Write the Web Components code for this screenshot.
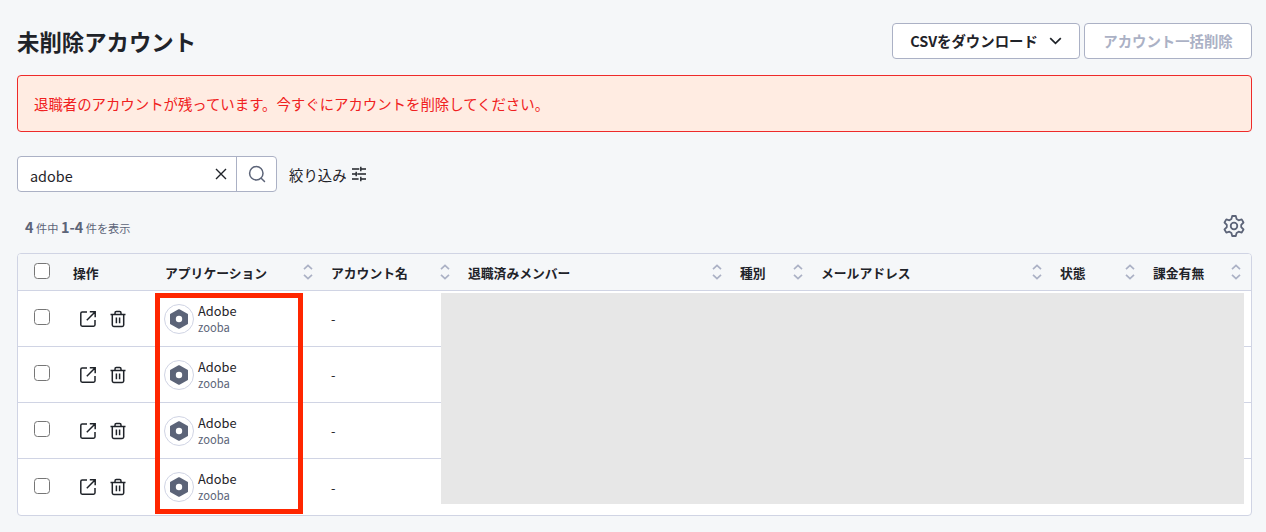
<!DOCTYPE html>
<html lang="ja">
<head>
  <meta charset="utf-8">
  <title>未削除アカウント</title>
  <style>
    body {
      margin: 0;
      background: #f5f7f9;
      color: #1f2329;
      font-family: "Noto Sans CJK JP", sans-serif;
      font-size: 14.4px;
    }
  </style>
</head>
<body>
  <accounts-page></accounts-page>

  <script>
    class AppButton extends HTMLElement {
      constructor() {
        super();
        this.attachShadow({ mode: "open" });
      }

      connectedCallback() {
        this.shadowRoot.innerHTML = `
          <style>
            :host { display: block; }
            button {
              display: flex;
              align-items: center;
              justify-content: center;
              box-sizing: border-box;
              width: 100%;
              height: 36px;
              padding: 0 0 1px;
              border: 1px solid #abb1c5;
              border-radius: 4px;
              background: #fff;
              color: #1f2329;
              font: inherit;
              font-weight: 700;
              white-space: nowrap;
            }
            :host([disabled]) button { color: #abb1c5; }
          </style>
          <button><slot></slot></button>
        `;
      }
    }
    customElements.define("app-button", AppButton);

    class AlertBox extends HTMLElement {
      constructor() {
        super();
        this.attachShadow({ mode: "open" });
      }

      connectedCallback() {
        this.shadowRoot.innerHTML = `
          <style>
            :host {
              display: flex;
              align-items: center;
              box-sizing: border-box;
              height: 57px;
              padding: 0 16px;
              border: 1px solid #ee2a2a;
              border-radius: 4px;
              background: #ffece2;
              color: #f02020;
            }
          </style>
          <slot></slot>
        `;
      }
    }
    customElements.define("alert-box", AlertBox);

    class SearchBox extends HTMLElement {
      constructor() {
        super();
        this.attachShadow({ mode: "open" });
      }

      connectedCallback() {
        this.shadowRoot.innerHTML = `
          <style>
            :host {
              display: flex;
              box-sizing: border-box;
              width: 260px;
              height: 36px;
              border: 1px solid #abb1c5;
              border-radius: 4px;
              background: #fff;
            }
            .field {
              flex: 1;
              display: flex;
              align-items: center;
              justify-content: space-between;
              padding: 0 9px 0 12px;
            }
            .text { padding-top: 2px; }
            .button {
              display: flex;
              align-items: center;
              justify-content: center;
              width: 39px;
              border-left: 1px solid #abb1c5;
            }
            svg { display: block; fill: none; }
          </style>
          <div class="field">
            <span class="text"><slot></slot></span>
            <svg width="12" height="12" viewBox="0 0 12 12" stroke="#1f2329" stroke-width="1.4"><path d="M1 1l10 10M11 1L1 11"/></svg>
          </div>
          <div class="button">
            <svg width="18" height="18" viewBox="0 0 18 18" stroke="#5c6478" stroke-width="1.5" stroke-linecap="round"><circle cx="8.3" cy="8.3" r="6.7"/><path d="M13.2 13.2l3.3 3.3"/></svg>
          </div>
        `;
      }
    }
    customElements.define("search-box", SearchBox);

    class SortIcon extends HTMLElement {
      constructor() {
        super();
        this.attachShadow({ mode: "open" });
      }

      connectedCallback() {
        this.shadowRoot.innerHTML = `
          <style>
            :host { display: block; }
            svg { display: block; }
          </style>
          <svg width="10" height="16" viewBox="0 0 10 16" fill="none" stroke="#abb1c5" stroke-width="1.7"><path d="M1 5.2L5 1.4l4 3.8M1 10.8l4 3.8 4-3.8"/></svg>
        `;
      }
    }
    customElements.define("sort-icon", SortIcon);

    class CheckBox extends HTMLElement {
      constructor() {
        super();
        this.attachShadow({ mode: "open" });
      }

      connectedCallback() {
        this.shadowRoot.innerHTML = `
          <style>
            :host {
              display: block;
              box-sizing: border-box;
              width: 16px;
              height: 16px;
              border: 1.4px solid #767676;
              border-radius: 3.5px;
              background: #fff;
            }
          </style>
        `;
      }
    }
    customElements.define("check-box", CheckBox);

    class AccountRow extends HTMLElement {
      constructor() {
        super();
        this.attachShadow({ mode: "open" });
      }

      connectedCallback() {
        this.shadowRoot.innerHTML = `
          <style>
            :host {
              display: grid;
              grid-template-columns: var(--columns);
              box-sizing: border-box;
              height: 56px;
              align-items: center;
              border-bottom: 1px solid #d0d4e4;
              font-size: 12.8px;
            }
            :host(:last-of-type) { border-bottom: 0; }
            check-box { margin: 0 0 3px 16px; }
            .actions {
              display: flex;
              gap: 12px;
              padding-left: 14px;
            }
            .app {
              display: flex;
              align-items: center;
              gap: 4px;
              padding-left: 7px;
            }
            .logo {
              display: flex;
              align-items: center;
              justify-content: center;
              box-sizing: border-box;
              width: 30px;
              height: 30px;
              border: 1px solid #d0d4e4;
              border-radius: 50%;
            }
            .name { line-height: 16px; }
            .sub {
              color: #5c6478;
              font-size: 11.2px;
              line-height: 16px;
            }
            .account { padding-left: 8px; }
            svg { display: block; }
          </style>
          <check-box></check-box>
          <div class="actions">
            <svg width="18" height="18" viewBox="0 0 18 18" fill="none" stroke="#1f2329" stroke-width="1.5"><path d="M8 2H3.2Q1.8 2 1.8 3.4v11.4q0 1.4 1.4 1.4h11.4q1.4 0 1.4-1.4V10M10.8 1.8H16.2V7.2M16 2L7.8 10.2"/></svg>
            <svg width="18" height="18" viewBox="0 0 18 18" fill="none" stroke="#1f2329" stroke-width="1.5"><path d="M1.5 4.4h15M6 4.2V2.9q0-1.3 1.3-1.3h3.4q1.3 0 1.3 1.3v1.3M3.3 4.4v10.7q0 1.4 1.4 1.4h8.6q1.4 0 1.4-1.4V4.4M7.4 7.6v5.6M10.6 7.6v5.6"/></svg>
          </div>
          <div class="app">
            <div class="logo">
              <svg width="20" height="20" viewBox="0 0 20 20"><path d="M10 1.2l8 4.4v8.8l-8 4.4-8-4.4V5.6z" fill="#5c6478" stroke="#5c6478" stroke-width="2" stroke-linejoin="round"/><circle cx="10" cy="10" r="3.2" fill="#fff"/></svg>
            </div>
            <div>
              <div class="name"><slot name="app"></slot></div>
              <div class="sub"><slot name="tenant"></slot></div>
            </div>
          </div>
          <div class="account"><slot name="account"></slot></div>
        `;
      }
    }
    customElements.define("account-row", AccountRow);

    class AccountsTable extends HTMLElement {
      constructor() {
        super();
        this.attachShadow({ mode: "open" });
      }

      connectedCallback() {
        const titles = ["アプリケーション", "アカウント名", "退職済みメンバー", "種別", "メールアドレス", "状態", "課金有無"];
        const heads = titles.map((t) => `<div class="th"><span>${t}</span><sort-icon></sort-icon></div>`).join("");
        const row = `
          <account-row>
            <span slot="app">Adobe</span>
            <span slot="tenant">zooba</span>
            <span slot="account">-</span>
          </account-row>`;

        this.shadowRoot.innerHTML = `
          <style>
            :host {
              --columns: 47px 92px 166px 137px 272px 81px 239px 93px 106px;
              display: block;
              position: relative;
              box-sizing: border-box;
              height: 263px;
              border: 1px solid #d0d4e4;
              border-radius: 4px;
              background: #fff;
            }
            .head {
              display: grid;
              grid-template-columns: var(--columns);
              align-items: center;
              box-sizing: border-box;
              height: 37px;
              border-bottom: 1px solid #d0d4e4;
              border-radius: 3px 3px 0 0;
              background: #f5f7f9;
              font-size: 12.8px;
              font-weight: 700;
            }
            .head check-box { margin: 0 0 2px 16px; }
            .th {
              display: flex;
              align-items: center;
              justify-content: space-between;
              padding: 0 10px 0 8px;
              white-space: nowrap;
            }
            /* masked columns and highlight lie over the rows */
            .mask {
              position: absolute;
              left: 422.5px;
              top: 39px;
              width: 803px;
              height: 210.5px;
              background: #e7e7e7;
            }
            .highlight {
              position: absolute;
              left: 137px;
              top: 38.5px;
              box-sizing: border-box;
              width: 147.5px;
              height: 221px;
              border: 5px solid #ff2600;
            }
          </style>
          <div class="head">
            <check-box></check-box>
            <div class="th"><span>操作</span></div>
            ${heads}
          </div>
          ${row.repeat(4)}
          <div class="mask"></div>
          <div class="highlight"></div>
        `;
      }
    }
    customElements.define("accounts-table", AccountsTable);

    class AccountsPage extends HTMLElement {
      constructor() {
        super();
        this.attachShadow({ mode: "open" });
      }

      connectedCallback() {
        this.shadowRoot.innerHTML = `
          <style>
            :host {
              display: block;
              box-sizing: border-box;
              height: 532px;
              padding: 23px 14px 0 17px;
              overflow: hidden;
            }
            header {
              display: flex;
              justify-content: space-between;
              height: 36px;
              margin-bottom: 16px;
            }
            h1 {
              margin: 0;
              font-size: 22.4px;
              line-height: 36px;
            }
            .buttons { display: flex; gap: 4px; }
            .csv { width: 188px; }
            .delete { width: 168px; }
            .csv svg { margin-left: 11px; }
            .filters {
              display: flex;
              align-items: center;
              gap: 12px;
              margin-top: 24px;
            }
            .narrow {
              display: flex;
              align-items: center;
              gap: 5px;
            }
            .summary {
              display: flex;
              align-items: center;
              justify-content: space-between;
              height: 24px;
              margin: 22px 7px 15px 8px;
              color: #5c6478;
              font-size: 11.2px;
            }
            .summary b { font-size: 14.4px; }
            svg { display: block; }
          </style>
          <header>
            <h1>未削除アカウント</h1>
            <div class="buttons">
              <app-button class="csv">CSVをダウンロード<svg width="13" height="8" viewBox="0 0 13 8" fill="none" stroke="#1f2329" stroke-width="1.7"><path d="M1.2 1.2l5.3 5.2 5.3-5.2"/></svg></app-button>
              <app-button class="delete" disabled>アカウント一括削除</app-button>
            </div>
          </header>
          <alert-box>退職者のアカウントが残っています。今すぐにアカウントを削除してください。</alert-box>
          <div class="filters">
            <search-box>adobe</search-box>
            <div class="narrow">
              <span>絞り込み</span>
              <svg width="14" height="16" viewBox="0 0 14 16" fill="none" stroke="#1f2329" stroke-width="1.4"><path d="M0 3h7.3M9.2 3H14M8.8.8v4.4M0 8h3.5M5.3 8H14M4.2 5.8v4.4M0 13h6.6M9.2 13H14M8.8 10.8v4.4"/></svg>
            </div>
          </div>
          <div class="summary">
            <div><b>4</b> 件中 <b>1-4</b> 件を表示</div>
            <svg width="22" height="24" viewBox="0 0 22 24" fill="none" stroke="#5c6478" stroke-width="1.8" stroke-linejoin="round"><path d="M9.2 2h3.6l.8 3.1 2 1.2 3.1-.9 1.8 3.1L18.200 10.800v2.400l2.300 2.300-1.800 3.100-3.100-.9-2 1.200-.8 3.100H9.200l-.8-3.100-2-1.200-3.100.9-1.800-3.100 2.300-2.300v-2.400L1.500 8.500l1.800-3.100 3.100.9 2-1.200z"/><circle cx="11" cy="12" r="3.300"/></svg>
          </div>
          <accounts-table></accounts-table>
        `;
      }
    }
    customElements.define("accounts-page", AccountsPage);
  </script>
</body>
</html>
